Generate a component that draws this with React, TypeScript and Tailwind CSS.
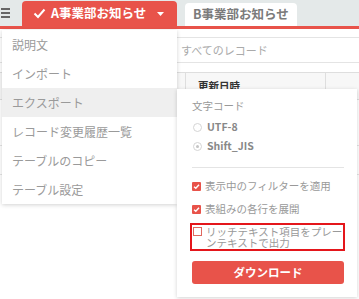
import { PropsWithChildren } from 'react';

const RED = 'bg-[#e8534a]';

const MenuItem = ({ label, active = false }: { label: string; active?: boolean }) => {
  return (
    <div
      className={`flex h-[29px] items-center pl-[10px] text-[12px] text-[#9a9a9a] ${active ? 'bg-[#efefef]' : ''}`}
    >
      {label}
    </div>
  );
};

const Radio = ({ label, checked = false }: { label: string; checked?: boolean }) => {
  return (
    <div className="flex h-[19px] items-center">
      <span className="ml-[1px] flex h-[9px] w-[9px] items-center justify-center rounded-full border border-[#d5d5d5]">
        {checked && <span className="h-[3px] w-[3px] rounded-full bg-[#c4c4c4]" />}
      </span>
      <span className="ml-[5px] text-[10.5px] font-bold text-[#888]">{label}</span>
    </div>
  );
};

const Check = ({ label }: { label: string }) => {
  return (
    <div className="flex h-[23px] items-center">
      <span className={`flex h-[9px] w-[9px] items-center justify-center rounded-[1px] ${RED}`}>
        <svg width="7" height="7" viewBox="0 0 10 10">
          <polyline
            points="1.5,5.2 4,7.6 8.6,2.4"
            fill="none"
            stroke="#fff"
            strokeWidth="2"
          />
        </svg>
      </span>
      <span className="ml-[4px] text-[10.5px] text-[#999]">{label}</span>
    </div>
  );
};

const Column = ({ children, className = '' }: PropsWithChildren & { className?: string }) => {
  return <div className={`h-full border-r border-[#dedede] ${className}`}>{children}</div>;
};

const App = () => {
  return (
    <div
      className="relative h-[299px] w-[359px] overflow-hidden bg-white"
      style={{ fontFamily: '"Noto Sans CJK JP", "Noto Sans", sans-serif' }}
    >
      {/* tab bar */}
      <div className="flex h-[29px] items-end border-b-[3px] border-[#e8534a] bg-[#e4e9e9]">
        <div className="mb-[8px] ml-[1px] flex w-[21px] flex-col gap-[2px] self-end">
          <span className="h-[2px] w-[9px] bg-[#666]" />
          <span className="h-[2px] w-[9px] bg-[#666]" />
          <span className="h-[2px] w-[9px] bg-[#666]" />
        </div>
        <div
          className={`flex h-[25px] w-[155px] items-center rounded-t-[4px] ${RED} pl-[11px] text-[12.5px] font-bold text-white`}
        >
          <svg width="13" height="11" viewBox="0 0 13 11" className="mr-[5px]">
            <polyline
              points="1.5,5.5 5,9 11.5,1.5"
              fill="none"
              stroke="#fff"
              strokeWidth="2"
            />
          </svg>
          A事業部お知らせ
          <svg width="7" height="4" viewBox="0 0 7 4" className="ml-[11px]">
            <polygon points="0,0 7,0 3.5,4" fill="#fff" />
          </svg>
        </div>
        <div className="ml-[8px] flex h-[23px] w-[112px] items-center rounded-t-[4px] bg-white pl-[8px] text-[12.5px] font-bold text-[#7b7b7b]">
          B事業部お知らせ
        </div>
      </div>

      {/* list view behind */}
      <div className="h-[9px] border-b border-[#e4e4e4]" />
      <div className="flex h-[25px] items-center border-b border-[#e4e4e4] pl-[181px] text-[11px] text-[#aaa]">
        すべてのレコード
      </div>
      <div className="h-[9px]" />
      <div className="flex h-[28px] border-y border-[#dedede] bg-[#f7f7f7]">
        <Column className="w-[186px]" />
        <Column className="w-[140px] pl-[12px] pt-[5px] text-[10.5px] font-bold text-[#333]">
          更新日時
        </Column>
        <div className="flex-1" />
      </div>
      <div className="flex h-[46px] border-b border-[#e4e4e4]" />
      <div className="flex h-[29px] border-b border-[#e4e4e4]" />

      {/* settings menu */}
      <div className="absolute left-[2px] top-[30px] w-[175px] bg-white shadow-[0_1px_4px_rgba(0,0,0,0.18)]">
        <MenuItem label="説明文" />
        <MenuItem label="インポート" />
        <MenuItem label="エクスポート" active />
        <MenuItem label="レコード変更履歴一覧" />
        <MenuItem label="テーブルのコピー" />
        <MenuItem label="テーブル設定" />
      </div>

      {/* export panel */}
      <div className="absolute left-[177px] top-[89px] h-[208px] w-[180px] bg-white pl-[15px] pr-[13px] pt-[10px] shadow-[0_1px_4px_rgba(0,0,0,0.18)]">
        <div className="h-[14px] text-[10.5px] leading-[14px] text-[#999]">文字コード</div>
        <div className="h-[4.5px]" />
        <Radio label="UTF-8" />
        <Radio label="Shift_JIS" checked />
        <div className="mt-[11.5px] h-px bg-[#e4e4e4]" />
        <div className="h-[6.5px]" />
        <Check label="表示中のフィルターを適用" />
        <Check label="表組みの各行を展開" />
        <div className="-ml-[2px] -mr-[1px] mt-[2.5px] flex h-[28px] border-2 border-[#e4161b] py-[1px]">
          <span className="ml-[1px] mt-[1px] h-[9px] w-[9px] shrink-0 border border-[#e0685f] bg-white" />
          <span className="ml-[4px] flex-1 text-[10.5px] leading-[11px] text-[#999]">
            リッチテキスト項目をプレーンテキストで出力
          </span>
        </div>
        <button
          className={`mt-[10px] flex h-[23px] w-full items-center justify-center rounded-[3px] ${RED} text-[11.5px] font-bold text-white`}
        >
          ダウンロード
        </button>
      </div>
    </div>
  );
};

export default App;
